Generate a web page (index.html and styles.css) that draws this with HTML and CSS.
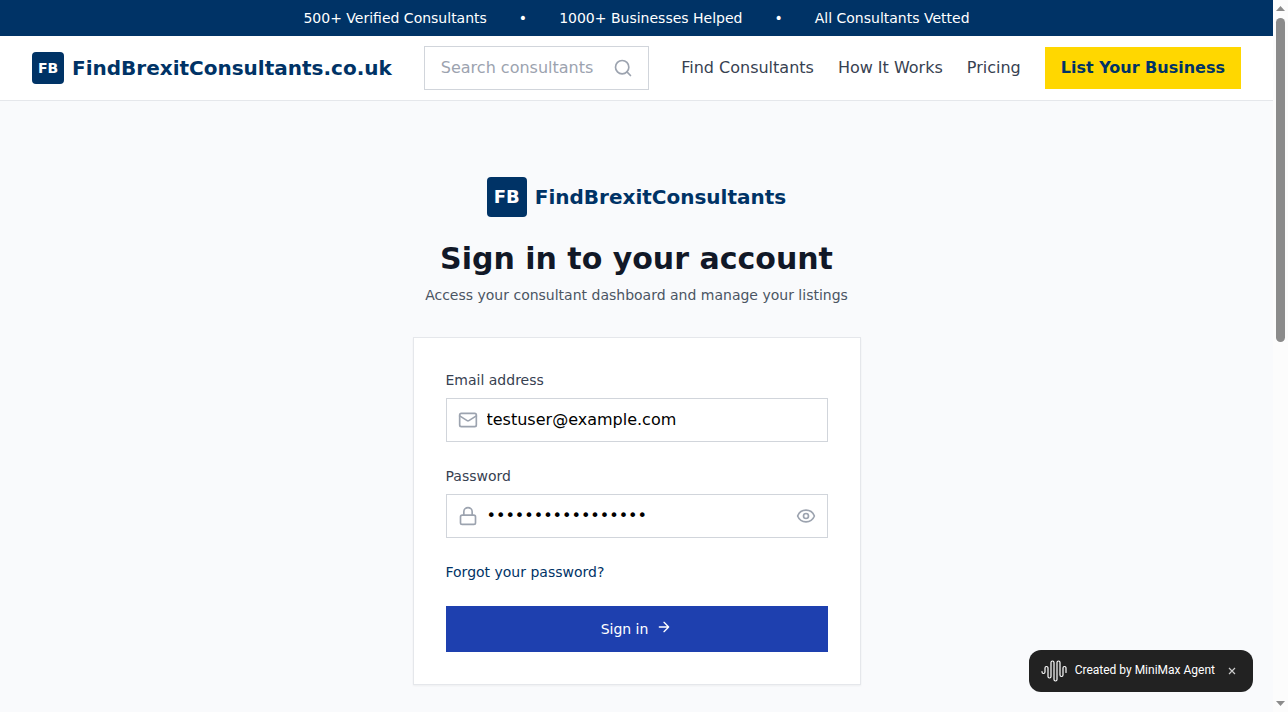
FILE: index.html
```html
<!DOCTYPE html>
<html lang="en">
<head>
<meta charset="utf-8">
<meta name="viewport" content="width=device-width, initial-scale=1">
<title>Sign in - FindBrexitConsultants.co.uk</title>
<link rel="stylesheet" href="styles.css">
</head>
<body>
<div class="shell">
  <div class="page">
    <div class="topbar">
      <span>500+ Verified Consultants</span>
      <span>•</span>
      <span>1000+ Businesses Helped</span>
      <span>•</span>
      <span>All Consultants Vetted</span>
    </div>
    <header class="header">
      <a class="brand" href="#"><span class="mark">FB</span><span>FindBrexitConsultants.co.uk</span></a>
      <form class="search" role="search">
        <input class="search-input" type="text" aria-label="Search consultants" placeholder="Search consultants">
        <button class="icon-button" type="submit" aria-label="Search">
          <svg class="icon" viewBox="0 0 24 24"><circle cx="11" cy="11" r="8"/><path d="m21 21-4.3-4.3"/></svg>
        </button>
      </form>
      <nav class="nav">
        <a href="#">Find Consultants</a>
        <a href="#">How It Works</a>
        <a href="#">Pricing</a>
        <a class="cta" href="#">List Your Business</a>
      </nav>
    </header>
    <main class="main">
      <a class="brand" href="#"><span class="mark mark-large">FB</span><span>FindBrexitConsultants</span></a>
      <h1 class="title">Sign in to your account</h1>
      <p class="subtitle">Access your consultant dashboard and manage your listings</p>
      <form class="card">
        <div class="field">
          <label for="email">Email address</label>
          <div class="control">
            <svg class="icon" viewBox="0 0 24 24"><rect x="2" y="4" width="20" height="16" rx="2"/><path d="m22 7-8.97 5.7a1.94 1.94 0 0 1-2.06 0L2 7"/></svg>
            <input id="email" type="email" value="testuser@example.com">
          </div>
        </div>
        <div class="field">
          <label for="password">Password</label>
          <div class="control">
            <svg class="icon" viewBox="0 0 24 24"><rect x="3" y="11" width="18" height="11" rx="2"/><path d="M7 11V7a5 5 0 0 1 10 0v4"/></svg>
            <input id="password" type="password" value="consultantpass123">
            <button class="icon-button" type="button" aria-label="Show password">
              <svg class="icon" viewBox="0 0 24 24"><path d="M2.06 12.35a1 1 0 0 1 0-.7 10.75 10.75 0 0 1 19.88 0 1 1 0 0 1 0 .7 10.75 10.75 0 0 1-19.88 0"/><circle cx="12" cy="12" r="3"/></svg>
            </button>
          </div>
        </div>
        <a class="forgot" href="#">Forgot your password?</a>
        <button class="submit" type="submit">
          <span>Sign in</span>
          <svg class="icon icon-small" viewBox="0 0 24 24"><path d="M5 12h14M12 5l7 7-7 7"/></svg>
        </button>
      </form>
    </main>
  </div>
  <div class="scrollbar" aria-hidden="true">
    <svg class="arrow" viewBox="0 0 9 5"><path d="M4.5 0 9 5H0z"/></svg>
    <div class="track"><div class="thumb"></div></div>
    <svg class="arrow" viewBox="0 0 9 5"><path d="M0 0h9L4.5 5z"/></svg>
  </div>
</div>
<div class="badge">
  <svg class="wave" viewBox="0 0 26 22"><path d="M1 11.5v.5a1.5 1.5 0 0 0 3 0V8a1.5 1.5 0 0 1 3 0v8.500a1.500 1.500 0 0 0 3 0V2.500a1.500 1.500 0 0 1 3 0v17a1.500 1.500 0 0 0 3 0v-17a1.500 1.500 0 0 1 3 0V15a1.500 1.500 0 0 0 3 0V8a1.500 1.500 0 0 1 3 0v4.500"/></svg>
  <span class="badge-text">Created by MiniMax Agent</span>
  <button class="close" type="button" aria-label="Close"><svg class="cross" viewBox="0 0 8 8"><path d="m1 1 6 6M7 1 1 7"/></svg></button>
</div>
</body>
</html>
```
FILE: styles.css
```css
* { box-sizing: border-box; }

body {
  margin: 0;
  font-family: "DejaVu Sans", sans-serif;
  font-size: 16px;
  line-height: 24px;
  color: #374151;
  background: #f9fafc;
}

a { color: inherit; text-decoration: none; }

button, input { font: inherit; }

button { border: 0; padding: 0; cursor: pointer; }

.shell {
  display: grid;
  grid-template-columns: minmax(0, 1fr) 15px;
  grid-template-rows: minmax(0, 1fr);
  height: 100vh;
  overflow: hidden;
}

.page { min-width: 0; overflow: hidden; }

.topbar {
  display: flex;
  justify-content: center;
  gap: 32px;
  padding: 8px 16px;
  font-size: 14px;
  line-height: 20px;
  color: #fff;
  background: #003366;
}

.header {
  display: flex;
  align-items: center;
  gap: 32px;
  padding: 10px 32px;
  background: #fff;
  border-bottom: 1px solid #e5e7eb;
}

.brand {
  display: flex;
  align-items: center;
  gap: 8px;
  font-size: 20px;
  line-height: 28px;
  font-weight: bold;
  color: #003366;
}

.mark {
  display: flex;
  align-items: center;
  justify-content: center;
  width: 32px;
  height: 32px;
  border-radius: 4px;
  font-size: 14px;
  color: #fff;
  background: #003366;
}

.mark-large { width: 40px; height: 40px; font-size: 18px; }

.icon {
  flex: none;
  display: block;
  width: 20px;
  height: 20px;
  fill: none;
  stroke: currentColor;
  stroke-width: 2;
  stroke-linecap: round;
  stroke-linejoin: round;
}

.icon-small { width: 16px; height: 16px; }

.icon-button { flex: none; color: #9ca3af; background: none; }

.search {
  flex: 1;
  display: flex;
  align-items: center;
  gap: 12px;
  min-width: 0;
  height: 44px;
  padding: 0 15px 0 16px;
  border: 1px solid #d1d5db;
  background: #fff;
}

.search-input,
.control input {
  flex: 1;
  min-width: 0;
  height: 24px;
  padding: 0;
  border: 0;
  outline: 0;
  line-height: 24px;
  color: #000;
  background: transparent;
}

.search-input::placeholder { color: #9ca3af; opacity: 1; }

.nav { display: flex; align-items: center; gap: 24px; white-space: nowrap; }

.cta {
  padding: 8px 16px;
  line-height: 26px;
  font-weight: bold;
  color: #003366;
  background: #ffd700;
}

.main {
  display: flex;
  flex-direction: column;
  align-items: center;
  padding: 76px 32px 48px;
}

.title {
  margin: 24px 0 8px;
  font-size: 30px;
  line-height: 36px;
  color: #111827;
}

.subtitle {
  margin: 0 0 32px;
  font-size: 14px;
  line-height: 20px;
  color: #4b5563;
}

.card {
  display: flex;
  flex-direction: column;
  gap: 24px;
  width: 100%;
  max-width: 448px;
  padding: 32px;
  font-size: 14px;
  line-height: 20px;
  border: 1px solid #e5e7eb;
  background: #fff;
  box-shadow: 0 1px 2px rgba(0, 0, 0, 0.05);
}

.field { display: flex; flex-direction: column; gap: 8px; }

.control {
  display: flex;
  align-items: center;
  gap: 9px;
  height: 44px;
  padding: 0 11px;
  font-size: 16px;
  color: #9ca3af;
  border: 1px solid #d1d5db;
}

.forgot { align-self: flex-start; color: #003366; }

.submit {
  display: flex;
  justify-content: center;
  align-items: flex-start;
  gap: 8px;
  padding: 13px 16px;
  color: #fff;
  background: #1e40af;
}

.scrollbar {
  display: flex;
  flex-direction: column;
  align-items: center;
  gap: 7px;
  padding: 6px 0;
  background: #fcfcfc;
}

.arrow { flex: none; width: 9px; height: 5px; fill: #8b8b8b; }

.track { flex: 1; }

.thumb { width: 9px; height: 48%; border-radius: 5px; background: #8b8b8b; }

.badge {
  position: fixed;
  right: 35px;
  bottom: 20px;
  display: flex;
  align-items: center;
  gap: 8px;
  height: 42px;
  padding: 0 16px 0 12px;
  border-radius: 12px;
  font-family: Roboto, sans-serif;
  font-size: 12px;
  line-height: 20px;
  color: #fff;
  background: #222;
}

.badge-text { padding-bottom: 2px; }

.wave { width: 26px; height: 22px; fill: none; stroke: #fff; stroke-width: 1.2; stroke-linecap: round; }

.close { margin-left: 4px; background: none; }

.cross { display: block; width: 10px; height: 8px; fill: none; stroke: #ccc; stroke-width: 1.2; }
```
